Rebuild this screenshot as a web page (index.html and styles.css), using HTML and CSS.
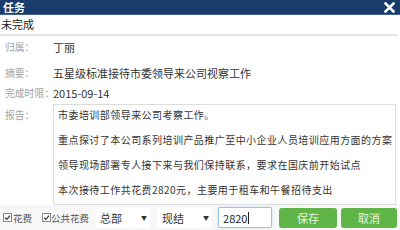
FILE: index.html
```html
<!DOCTYPE html>
<html lang="zh">
<head>
<meta charset="utf-8">
<link rel="stylesheet" href="styles.css">
</head>
<body>
<div class="dialog">
  <div class="titlebar">
    <span class="title">任务</span>
    <svg class="close" width="11" height="11" viewBox="0 0 11 11"><path d="M1.5 1.5 L9.5 9.5 M9.5 1.5 L1.5 9.5" stroke="#fff" stroke-width="2.6" stroke-linecap="square"/></svg>
  </div>
  <div class="status">未完成</div>
  <div class="row row-owner"><span class="label">归属：</span><span class="value">丁丽</span></div>
  <div class="row row-summary"><span class="label">摘要：</span><span class="value">五星级标准接待市委领导来公司视察工作</span></div>
  <div class="row row-deadline"><span class="label">完成时限：</span><span class="value">2015-09-14</span></div>
  <div class="row row-report">
    <span class="label report-label">报告：</span>
    <div class="report">
      <div class="report-text">
        <p>市委培训部领导来公司考察工作。</p>
        <p>重点探讨了本公司系列培训产品推广至中小企业人员培训应用方面的方案</p>
        <p>领导现场部署专人接下来与我们保持联系，要求在国庆前开始试点</p>
        <p>本次接待工作共花费2820元，主要用于租车和午餐招待支出</p>
      </div>
    </div>
  </div>
  <div class="footer">
    <label class="check"><svg width="9" height="9" viewBox="0 0 9 9"><rect x="0.5" y="0.5" width="8" height="8" fill="#fff" stroke="#8a8a8a"/><path d="M2 4.6 L3.8 6.4 L7 2.6" fill="none" stroke="#333" stroke-width="1.2"/></svg><span>花费</span></label>
    <label class="check check-public"><svg width="9" height="9" viewBox="0 0 9 9"><rect x="0.5" y="0.5" width="8" height="8" fill="#fff" stroke="#8a8a8a"/><path d="M2 4.6 L3.8 6.4 L7 2.6" fill="none" stroke="#333" stroke-width="1.2"/></svg><span>公共花费</span></label>
    <div class="select select-dept"><span>总部</span><span class="arrow">▼</span></div>
    <div class="select select-pay"><span>现结</span><span class="arrow">▼</span></div>
    <div class="amount">2820<span class="caret"></span></div>
    <div class="btn btn-save">保存</div>
    <div class="btn btn-cancel">取消</div>
  </div>
</div>
</body>
</html>
```
FILE: styles.css
```css
html, body {
  margin: 0;
  padding: 0;
  background: #fff;
}
body {
  font-family: "Noto Sans CJK SC", "Noto Sans", sans-serif;
  color: #333;
  width: 400px;
  height: 230px;
  overflow: hidden;
}
.dialog {
  width: 400px;
  height: 230px;
  display: flex;
  flex-direction: column;
}
.dialog > * {
  flex-shrink: 0;
}
.titlebar {
  height: 15px;
  background: #1a3b6c;
  border-bottom: 1px solid #41618f;
  box-sizing: border-box;
  display: flex;
  align-items: center;
  justify-content: space-between;
  padding: 0 5px 0 3px;
}
.title {
  color: #fff;
  font-weight: bold;
  font-size: 11px;
  line-height: 14px;
}
.close {
  display: block;
}
.status {
  height: 19px;
  line-height: 19px;
  font-size: 11px;
  padding-left: 1px;
  color: #222;
  border-bottom: 2px solid #e4e4e4;
  margin-right: 2px;
}
.row {
  display: flex;
  align-items: center;
  font-size: 11px;
}
.row-owner { height: 20px; margin-top: 1px; }
.row-summary { height: 21px; margin-top: 5px; }
.row-deadline { height: 19px; }
.label {
  width: 48px;
  padding-left: 5px;
  color: #a3a3a3;
  font-size: 9.8px;
  white-space: nowrap;
  flex: none;
}
.value {
  color: #333;
  white-space: nowrap;
}
.row-report {
  align-items: flex-start;
  margin-top: 2px;
}
.report-label {
  margin-top: 3px;
  line-height: 17px;
}
.report {
  width: 343px;
  height: 101px;
  border: 1px solid #dcdcdc;
  box-sizing: border-box;
  overflow: hidden;
}
.report-text {
  margin-top: -3px;
  padding-left: 4px;
  font-size: 10px;
  letter-spacing: 0.45px;
  line-height: 25px;
  color: #333;
}
.report-text p {
  margin: 0;
  white-space: nowrap;
}
.footer {
  flex: 1 0 auto;
  display: flex;
  align-items: center;
  padding-left: 3px;
  font-size: 11px;
  background: #f7f7f7;
  white-space: nowrap;
}
.footer > * {
  flex: none;
}
.check {
  display: flex;
  align-items: center;
  color: #555;
  font-size: 9.5px;
}
.check svg { display: block; margin-right: 1px; }
.check-public { margin-left: 10px; }
.check-public svg { margin-right: 0; }
.select {
  display: flex;
  align-items: center;
  justify-content: space-between;
  width: 55px;
  height: 20px;
  box-sizing: border-box;
  padding: 0 3px 0 5px;
  margin-left: 6px;
  background: #fff;
  color: #333;
  font-size: 11px;
}
.select-pay { margin-left: 7px; }
.arrow {
  font-size: 6px;
  color: #333;
}
.amount {
  margin-left: 6px;
  width: 54px;
  height: 21px;
  box-sizing: border-box;
  border: 1px solid #9fc3e6;
  box-shadow: 0 0 2px #b8d4f0;
  border-radius: 2px;
  background: #fff;
  display: flex;
  align-items: center;
  padding-left: 4px;
  font-size: 11px;
  color: #222;
}
.caret {
  width: 1px;
  height: 12px;
  background: #222;
  margin-left: 1px;
}
.btn {
  height: 20px;
  line-height: 20px;
  text-align: center;
  background: #5fb548;
  color: #e9f5e2;
  border-radius: 3px;
  font-size: 11px;
}
.btn-save { width: 58px; margin-left: 7px; }
.btn-cancel { width: 56px; margin-left: 4px; }
```
